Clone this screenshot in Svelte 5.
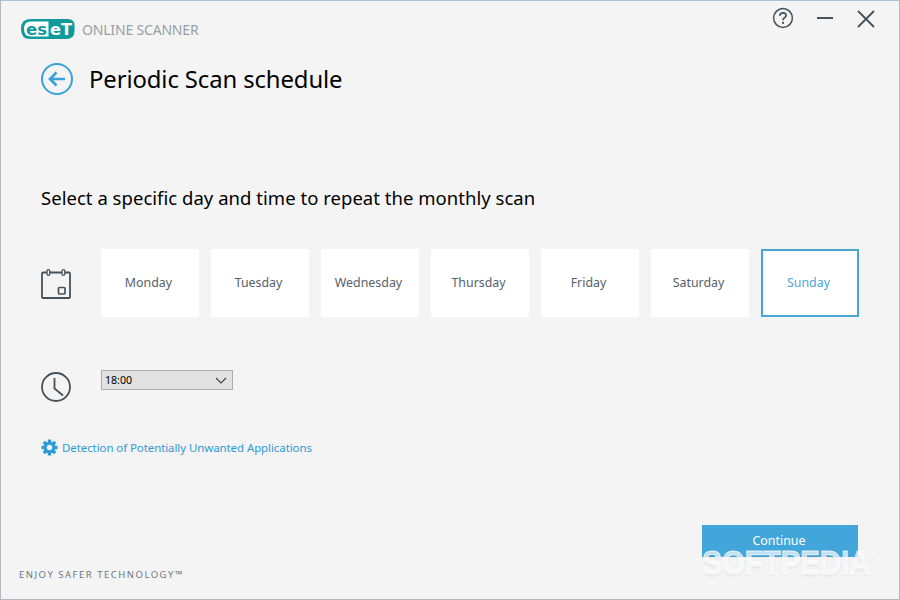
<script>
  const days = ['Monday','Tuesday','Wednesday','Thursday','Friday','Saturday','Sunday'];
</script>

<div class="win">
  <header class="top">
    <div class="brand">
      <svg class="logo" width="54" height="20" viewBox="0 0 54 20" aria-hidden="true">
        <path d="M9 0H47Q53.5 0 53.5 6.5V12Q53.5 20 45 20H9Q0 20 0 10 0 0 9 0Z" fill="#0f9a9c"/>
        <path d="M3 10Q3 2.6 10 2.6H27.5V17.4H10Q3 17.4 3 10Z" fill="#fff"/>
        <text x="5" y="15.6" class="lg lgd" textLength="21" lengthAdjust="spacingAndGlyphs">es</text>
        <text x="29" y="15.6" class="lg lgw" textLength="22" lengthAdjust="spacingAndGlyphs">eT</text>
      </svg>
      <span class="product">ONLINE SCANNER</span>
    </div>
    <div class="controls">
      <svg width="22" height="22" viewBox="0 0 22 22" aria-hidden="true">
        <circle cx="11" cy="11" r="9.4" fill="none" stroke="#46515a" stroke-width="1.5"/>
        <path d="M7.9 8.7C7.9 6.8 9.3 5.8 11 5.8S14.1 6.9 14.1 8.5C14.1 10.6 11 10.8 11 13.2" fill="none" stroke="#46515a" stroke-width="1.7"/>
        <rect x="10" y="14.8" width="2" height="2" fill="#46515a"/>
      </svg>
      <span class="min"></span>
      <svg width="18" height="18" viewBox="0 0 18 18" aria-hidden="true">
        <path d="M1 1L17 17M17 1L1 17" stroke="#46515a" stroke-width="1.8" fill="none"/>
      </svg>
    </div>
  </header>

  <div class="title">
    <svg width="32" height="32" viewBox="0 0 32 32" aria-hidden="true">
      <circle cx="16" cy="16" r="15" fill="none" stroke="#3ba1d8" stroke-width="2"/>
      <path d="M24 16H9M15.5 9.5L9 16l6.5 6.5" fill="none" stroke="#3ba1d8" stroke-width="2.6"/>
    </svg>
    <h1>Periodic Scan schedule</h1>
  </div>

  <h2>Select a specific day and time to repeat the monthly scan</h2>

  <div class="row days">
    <svg class="rowicon cal" width="30" height="30" viewBox="0 0 30 30" aria-hidden="true">
      <rect x="1" y="3.5" width="28" height="25.5" rx="1" fill="none" stroke="#46515a" stroke-width="1.8"/>
      <rect x="6" y="0.7" width="2.8" height="5.6" rx="1.4" fill="#f4f4f4" stroke="#46515a" stroke-width="1.3"/>
      <rect x="21" y="0.7" width="2.8" height="5.6" rx="1.4" fill="#f4f4f4" stroke="#46515a" stroke-width="1.3"/>
      <rect x="17.5" y="18.5" width="6.5" height="6.5" rx="1" fill="none" stroke="#46515a" stroke-width="1.7"/>
    </svg>
    <div class="cards">
      {#each days as d}
        <div class="card" class:active={d === 'Sunday'}>{d}</div>
      {/each}
    </div>
  </div>

  <div class="row time">
    <svg class="rowicon" width="30" height="30" viewBox="0 0 30 30" aria-hidden="true">
      <circle cx="15" cy="15" r="14" fill="none" stroke="#46515a" stroke-width="1.8"/>
      <path d="M13.5 6V16.5L22 23.5" fill="none" stroke="#46515a" stroke-width="1.8"/>
    </svg>
    <div class="select">
      <span>18:00</span>
      <svg width="12" height="7" viewBox="0 0 12 7" aria-hidden="true"><path d="M1 1L6 6L11 1" fill="none" stroke="#444" stroke-width="1.1"/></svg>
    </div>
  </div>

  <div class="link">
    <svg width="17" height="17" viewBox="0 0 18 18" aria-hidden="true">
      <path d="M9 .5V17.5M.5 9H17.5M3 3L15 15M15 3L3 15" stroke="#2b9ad6" stroke-width="3.6"/>
      <circle cx="9" cy="9" r="6.2" fill="#2b9ad6"/>
      <circle cx="9" cy="9" r="2.9" fill="#f4f4f4"/>
    </svg>
    <span>Detection of Potentially Unwanted Applications</span>
  </div>

  <div class="foot">
    <span class="tag">ENJOY SAFER TECHNOLOGY™</span>
    <div class="btn">Continue</div>
  </div>

  <div class="wm">SOFTPEDIA<sup>®</sup></div>
</div>

<style>
  :global(body) { margin: 0; }
  .win {
    position: relative;
    box-sizing: border-box;
    width: 900px;
    height: 600px;
    overflow: hidden;
    background: #f4f4f4;
    border: 1px solid #b3b8bb;
    border-top-color: #a9c6d8;
    display: flex;
    flex-direction: column;
    font-family: "Noto Sans", "Open Sans", sans-serif;
    color: #000;
  }
  .top {
    display: flex;
    justify-content: space-between;
    height: 40px;
  }
  .brand {
    display: flex;
    align-items: center;
    gap: 7px;
    padding: 18px 0 0 20px;
    height: 20px;
  }
  .lg { font-family: "DejaVu Sans", sans-serif; font-weight: 700; font-size: 16px; }
  .lgd { fill: #0f9a9c; }
  .lgw { fill: #fff; }
  .product {
    font-size: 14px;
    letter-spacing: -0.18px;
    color: #9aa0a5;
  }
  .controls {
    display: flex;
    align-items: flex-start;
    padding: 6px 24px 0 0;
  }
  .controls svg:first-child { margin-right: 23px; }
  .controls svg:last-child { margin-top: 3px; }
  .min {
    width: 16px;
    height: 2px;
    background: #46515a;
    margin: 10px 24px 0 0;
  }
  .title {
    display: flex;
    align-items: center;
    gap: 16px;
    margin: 22px 0 0 40px;
    height: 32px;
  }
  h1 {
    margin: 0;
    font-weight: 400;
    font-size: 23.85px;
    line-height: 32px;
    letter-spacing: -0.1px;
  }
  h2 {
    margin: 90px 0 0 40px;
    font-weight: 400;
    font-size: 18.5px;
    line-height: 26px;
    letter-spacing: 0.03px;
  }
  .row { display: flex; margin-left: 40px; }
  .rowicon { flex: none; }
  .days { margin-top: 38px; height: 68px; }
  .cal { margin-top: 20px; }
  .cards {
    display: flex;
    gap: 12px;
    margin-left: 30px;
  }
  .card {
    box-sizing: border-box;
    width: 98px;
    height: 68px;
    padding: 0 3px 2px 0;
    background: #fff;
    display: flex;
    align-items: center;
    justify-content: center;
    font-size: 12.4px;
    color: #56616a;
  }
  .card.active {
    border: 2px solid #48a6d6;
    color: #4aa7dc;
  }
  .time { margin-top: 53px; }
  .time .rowicon { margin-top: 2px; }
  .select {
    box-sizing: border-box;
    width: 132px;
    height: 20px;
    margin-left: 30px;
    padding: 0 5px 0 3px;
    background: #e1e1e1;
    border: 1px solid #adadad;
    display: flex;
    align-items: center;
    justify-content: space-between;
    font-size: 10.6px;
    color: #000;
  }
  .link {
    display: flex;
    align-items: center;
    gap: 4px;
    margin: 36px 0 0 40px;
    height: 18px;
    font-size: 11.5px;
    letter-spacing: -0.09px;
    color: #2f9ad6;
  }
  .foot {
    margin-top: auto;
    padding: 0 41px 0 18px;
    height: 74px;
    display: flex;
    justify-content: space-between;
  }
  .tag {
    align-self: flex-end;
    margin-bottom: 18px;
    font-size: 9.5px;
    line-height: 13px;
    letter-spacing: 1.5px;
    color: #6e767c;
  }
  .btn {
    box-sizing: border-box;
    width: 156px;
    height: 32px;
    padding-right: 2px;
    background: #43a6da;
    color: #fff;
    font-size: 12.4px;
    text-align: center;
    line-height: 31px;
  }
  .wm {
    position: absolute;
    left: 701px;
    top: 544px;
    font-family: "Liberation Sans", sans-serif;
    font-weight: 700;
    font-size: 30px;
    line-height: 36px;
    letter-spacing: -0.4px;
    transform: scaleY(1.08);
    -webkit-text-stroke: 0.8px rgba(255,255,255,0.7);
    color: rgba(255,255,255,0.7);
    text-shadow: 0 2px 3px rgba(0,0,0,0.07);
    white-space: nowrap;
  }
  .wm sup { font-size: 10px; font-weight: 400; vertical-align: 13px; line-height: 0; -webkit-text-stroke: 0; }
</style>
